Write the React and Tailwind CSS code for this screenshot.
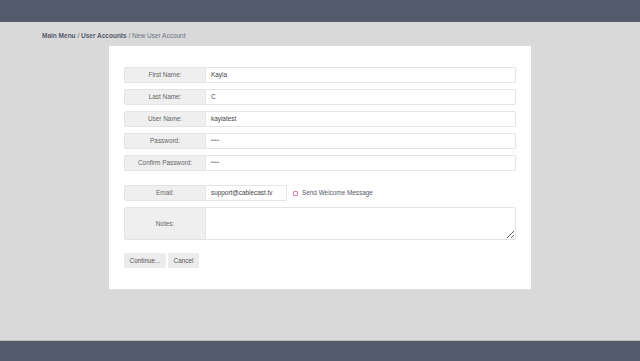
import React from "react";

const font = { fontFamily: '"Liberation Sans", Arial, sans-serif' };

function Row({ label, value }) {
  return (
    <div className="flex h-[16px]">
      <div className="w-[82px] shrink-0 flex items-center justify-center bg-[#efefef] border border-[#e4e4e4] rounded-l-[2px] text-[6.4px] text-[#666]">
        {label}
      </div>
      <div className="flex-1 flex items-center px-[5px] bg-white border border-l-0 border-[#e4e4e4] rounded-r-[2px] text-[6.4px] text-[#444]">
        {value}
      </div>
    </div>
  );
}

const Dots = () => <span className="text-[5px] tracking-[0.3px] text-[#666]">••••</span>;

export default function App() {
  return (
    <div style={font} className="min-h-[361px] h-[361px] flex flex-col bg-[#d9d9d9]">
      <div className="h-[22px] shrink-0 bg-[#535a6c]" />
      <div className="flex-1 flex flex-col">
        <div className="pl-[42px] pt-[11px] h-[24px] text-[6.5px] text-[#545a6c] leading-none">
          <span className="font-bold">Main Menu</span>
          <span> / </span>
          <span className="font-bold">User Accounts</span>
          <span className="text-[#6b7080]"> / New User Account</span>
        </div>
        <div className="ml-[109px] w-[422px] h-[244px] bg-white border-b border-[#e2e2e2] px-[15px] pt-[21px] flex flex-col">
          <div className="flex flex-col gap-[6px]">
            <Row label="First Name:" value="Kayla" />
            <Row label="Last Name:" value="C" />
            <Row label="User Name:" value="kaylatest" />
            <Row label="Password:" value={<Dots />} />
            <Row label="Confirm Password:" value={<Dots />} />
          </div>
          <div className="mt-[14px] flex h-[16px] items-center">
            <div className="w-[82px] h-full shrink-0 flex items-center justify-center bg-[#efefef] border border-[#e4e4e4] rounded-l-[2px] text-[6.4px] text-[#666]">
              Email:
            </div>
            <div className="w-[81px] h-full flex items-center px-[5px] bg-white border border-l-0 border-[#e4e4e4] rounded-r-[2px] text-[6.4px] text-[#444]">
              support@cablecast.tv
            </div>
            <div className="ml-[6px] w-[5px] h-[5px] border border-[#e07fae] rounded-[1px] bg-white" />
            <span className="ml-[4px] text-[6.4px] text-[#555a66]">Send Welcome Message</span>
          </div>
          <div className="mt-[6px] flex h-[33px]">
            <div className="w-[82px] shrink-0 flex items-center justify-center bg-[#efefef] border border-[#e4e4e4] rounded-l-[2px] text-[6.4px] text-[#666]">
              Notes:
            </div>
            <textarea
              readOnly
              className="flex-1 bg-white border border-l-0 border-[#e4e4e4] rounded-r-[2px] outline-none"
            />
          </div>
          <div className="mt-[13px] flex gap-[2px]">
            <div className="w-[42px] h-[15px] flex items-center justify-center bg-[#ececec] rounded-[2px] text-[6.4px] text-[#555]">
              Continue...
            </div>
            <div className="w-[31px] h-[15px] flex items-center justify-center bg-[#ececec] rounded-[2px] text-[6.4px] text-[#555]">
              Cancel
            </div>
          </div>
        </div>
      </div>
      <div className="h-[21px] shrink-0 bg-[#535a6c] border-t border-[#bcbcbc]" />
    </div>
  );
}
